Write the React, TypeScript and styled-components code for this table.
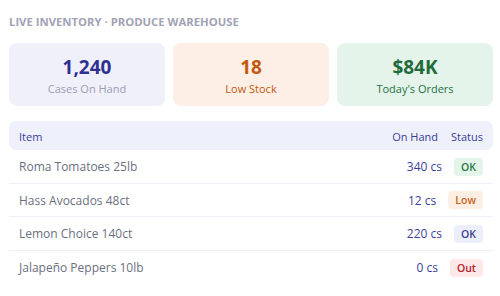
import React from 'react';
import styled, { createGlobalStyle } from 'styled-components';

const GlobalStyle = createGlobalStyle`
  html, body {
    margin: 0;
    padding: 0;
    background: #ffffff;
    font-family: "Open Sans", Inter, sans-serif;
  }
  * { box-sizing: border-box; }
`;

type Tone = 'indigo' | 'orange' | 'green' | 'red';

const tones: Record<Tone, { bg: string; fg: string; sub: string }> = {
  indigo: { bg: '#f0f0fb', fg: '#2e3190', sub: '#9a9db2' },
  orange: { bg: '#fdefe6', fg: '#c4580e', sub: '#c4580e' },
  green: { bg: '#e4f4ea', fg: '#1f6b3b', sub: '#2a7046' },
  red: { bg: '#fde8e8', fg: '#b4232a', sub: '#b4232a' },
};

const badgeTones: Record<Tone, { bg: string; fg: string }> = {
  indigo: { bg: '#eceffb', fg: '#3d418f' },
  orange: { bg: '#fdeee4', fg: '#c8641e' },
  green: { bg: '#e3f4e9', fg: '#2a7a45' },
  red: { bg: '#fde8e8', fg: '#b4232a' },
};

const stats: { value: string; label: string; tone: Tone }[] = [
  { value: '1,240', label: 'Cases On Hand', tone: 'indigo' },
  { value: '18', label: 'Low Stock', tone: 'orange' },
  { value: '$84K', label: "Today's Orders", tone: 'green' },
];

const items: { name: string; qty: string; status: string; tone: Tone }[] = [
  { name: 'Roma Tomatoes 25lb', qty: '340 cs', status: 'OK', tone: 'green' },
  { name: 'Hass Avocados 48ct', qty: '12 cs', status: 'Low', tone: 'orange' },
  { name: 'Lemon Choice 140ct', qty: '220 cs', status: 'OK', tone: 'indigo' },
  { name: 'Jalapeño Peppers 10lb', qty: '0 cs', status: 'Out', tone: 'red' },
];

export default function App() {
  return (
    <>
      <GlobalStyle />
      <Page>
        <Title>Live Inventory · Produce Warehouse</Title>
        <Cards>
          {stats.map(s => (
            <Card key={s.label} tone={s.tone}>
              <CardValue tone={s.tone}>{s.value}</CardValue>
              <CardLabel tone={s.tone}>{s.label}</CardLabel>
            </Card>
          ))}
        </Cards>
        <List>
          <HeadRow>
            <HeadCell grow>Item</HeadCell>
            <HeadCell>On Hand</HeadCell>
            <HeadCell>Status</HeadCell>
          </HeadRow>
          {items.map((it, i) => (
            <Row key={it.name} last={i === items.length - 1}>
              <Name>{it.name}</Name>
              <Qty>{it.qty}</Qty>
              <Badge tone={it.tone}>{it.status}</Badge>
            </Row>
          ))}
        </List>
      </Page>
    </>
  );
}

const Page = styled.div`
  width: 500px;
  height: 296px;
  padding: 14px 7px 0 9px;
  display: flex;
  flex-direction: column;
`;

const Title = styled.div`
  font-size: 11.3px;
  line-height: 16px;
  font-weight: 700;
  text-transform: uppercase;
  color: #a0a3b4;
`;

const Cards = styled.div`
  display: grid;
  grid-template-columns: repeat(3, 1fr);
  gap: 8px;
  margin-top: 13px;
`;

const Card = styled.div<{ tone: Tone }>`
  height: 63px;
  border-radius: 8px;
  background: ${p => tones[p.tone].bg};
  display: flex;
  flex-direction: column;
  align-items: center;
  justify-content: center;
  gap: 3px;
  padding-top: 2px;
`;

const CardValue = styled.div<{ tone: Tone }>`
  font-size: 19px;
  line-height: 24px;
  font-weight: 700;
  color: ${p => tones[p.tone].fg};
`;

const CardLabel = styled.div<{ tone: Tone }>`
  font-size: 11px;
  line-height: 14px;
  color: ${p => tones[p.tone].sub};
`;

const List = styled.div`
  margin-top: 15px;
  display: flex;
  flex-direction: column;
`;

const HeadRow = styled.div`
  height: 29px;
  padding: 1px 10px 0;
  border-radius: 7px;
  background: #eef0fb;
  display: flex;
  align-items: center;
  gap: 13px;
`;

const HeadCell = styled.div<{ grow?: boolean }>`
  flex: ${p => (p.grow ? 1 : 'none')};
  font-size: 11px;
  font-weight: 500;
  color: #3a3d9a;
`;

const Row = styled.div<{ last: boolean }>`
  height: 33.5px;
  padding: 1px 10px 0;
  display: flex;
  align-items: center;
  gap: 12px;
  border-bottom: ${p => (p.last ? 'none' : '1px solid #eef0f8')};
`;

const Name = styled.div`
  flex: 1;
  font-size: 12px;
  color: #6b6f80;
`;

const Qty = styled.div`
  font-size: 12px;
  color: #3b3f9c;
  white-space: nowrap;
`;

const Badge = styled.span<{ tone: Tone }>`
  height: 18px;
  line-height: 18px;
  padding: 0 7px;
  border-radius: 4px;
  font-size: 10.5px;
  font-weight: 600;
  background: ${p => badgeTones[p.tone].bg};
  color: ${p => badgeTones[p.tone].fg};
`;
